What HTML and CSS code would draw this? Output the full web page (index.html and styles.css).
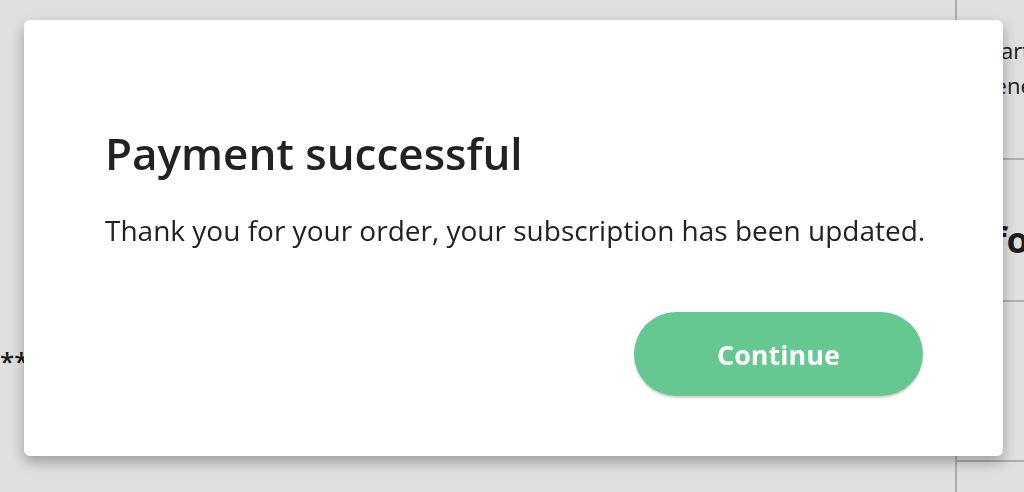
FILE: index.html
```html
<!DOCTYPE html>
<html lang="en">
<head>
    <meta charset="UTF-8">
    <meta name="viewport" content="width=device-width, initial-scale=1.0">
    <title>Payment</title>
    <link rel="stylesheet" href="styles.css">
</head>
<body>
    <div class="page">
        <main class="content">
            <div class="masked">**</div>
        </main>
        <aside class="sidebar">
            <div class="side-block">
                <p>Start</p>
                <p>Renew</p>
            </div>
            <div class="side-block">
                <h3>Info</h3>
            </div>
            <div class="side-block"></div>
        </aside>
    </div>

    <div class="overlay"></div>

    <div class="modal">
        <h1>Payment successful</h1>
        <p>Thank you for your order, your subscription has been updated.</p>
        <div class="actions">
            <button class="btn-continue">Continue</button>
        </div>
    </div>
</body>
</html>
```

FILE: styles.css
```css
body {
    font-family: 'Open Sans', sans-serif;
    margin: 0;
    padding: 0;
    background-color: #fff;
    color: #222;
    overflow: hidden;
}

.page {
    display: flex;
    height: 492px;
}

.content {
    flex: none;
    width: 955px;
    padding-top: 343px;
}

.masked {
    font-size: 26px;
    font-weight: 600;
    line-height: 36px;
}

.sidebar {
    flex: 1;
    min-width: 0;
    border-left: 2px solid #c8c8c8;
}

.side-block {
    border-bottom: 2px solid #c8c8c8;
    height: 160px;
    box-sizing: border-box;
    padding: 33px 0 0 24px;
}

.side-block p {
    margin: 0;
    font-size: 22px;
    line-height: 35px;
    white-space: nowrap;
}

.side-block:nth-child(2) {
    height: 142px;
    padding: 55px 0 0 0;
}

.side-block h3 {
    margin: 0;
    font-size: 36px;
    font-weight: 700;
    line-height: 50px;
    white-space: nowrap;
}

.overlay {
    position: fixed;
    inset: 0;
    background: rgba(0, 0, 0, 0.125);
}

.modal {
    position: fixed;
    left: 24px;
    top: 20px;
    width: 979px;
    height: 436px;
    box-sizing: border-box;
    padding: 101px 60px 0 81px;
    background-color: #fff;
    border-radius: 6px;
    box-shadow: 0 6px 14px rgba(0, 0, 0, 0.3);
}

.modal h1 {
    margin: 0;
    font-size: 44px;
    font-weight: 600;
    line-height: 64px;
    color: #222;
}

.modal p {
    margin: 26px 0 0;
    font-size: 28px;
    line-height: 38px;
    color: #222;
    white-space: nowrap;
}

.actions {
    display: flex;
    justify-content: flex-end;
    margin-top: 63px;
    padding-right: 20px;
}

.btn-continue {
    width: 289px;
    height: 84px;
    border: none;
    border-radius: 42px;
    background-color: #66c891;
    color: #fff;
    font-family: 'Open Sans', sans-serif;
    font-size: 27px;
    font-weight: 700;
    box-shadow: 0 2px 2px rgba(0, 0, 0, 0.18);
    cursor: pointer;
}
```
